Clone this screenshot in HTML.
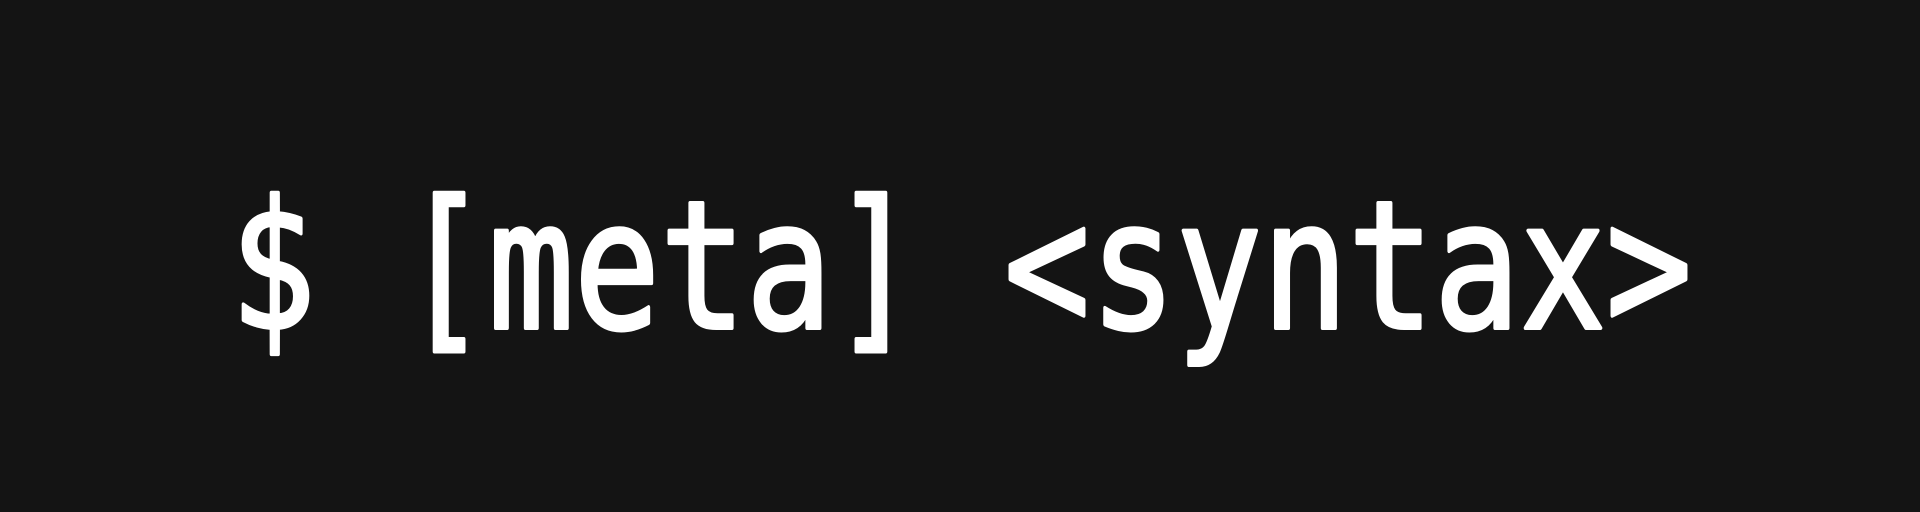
<!DOCTYPE html>
<html><head><meta charset="utf-8"><style>
html,body{margin:0;padding:0;background:#141414;width:1920px;height:512px;overflow:hidden}
svg{display:block}
</style></head><body>
<svg width="1920" height="512" viewBox="0 0 1920 512" xmlns="http://www.w3.org/2000/svg">
<rect width="1920" height="512" fill="#141414"/>
<text x="230" y="328" fill="#ffffff" stroke="#ffffff" stroke-width="4" stroke-linejoin="round" font-family="DejaVu Sans Mono, monospace" font-weight="normal" font-size="178" textLength="1462" lengthAdjust="spacingAndGlyphs">$ [meta] &lt;syntax&gt;</text>
</svg>
</body></html>
